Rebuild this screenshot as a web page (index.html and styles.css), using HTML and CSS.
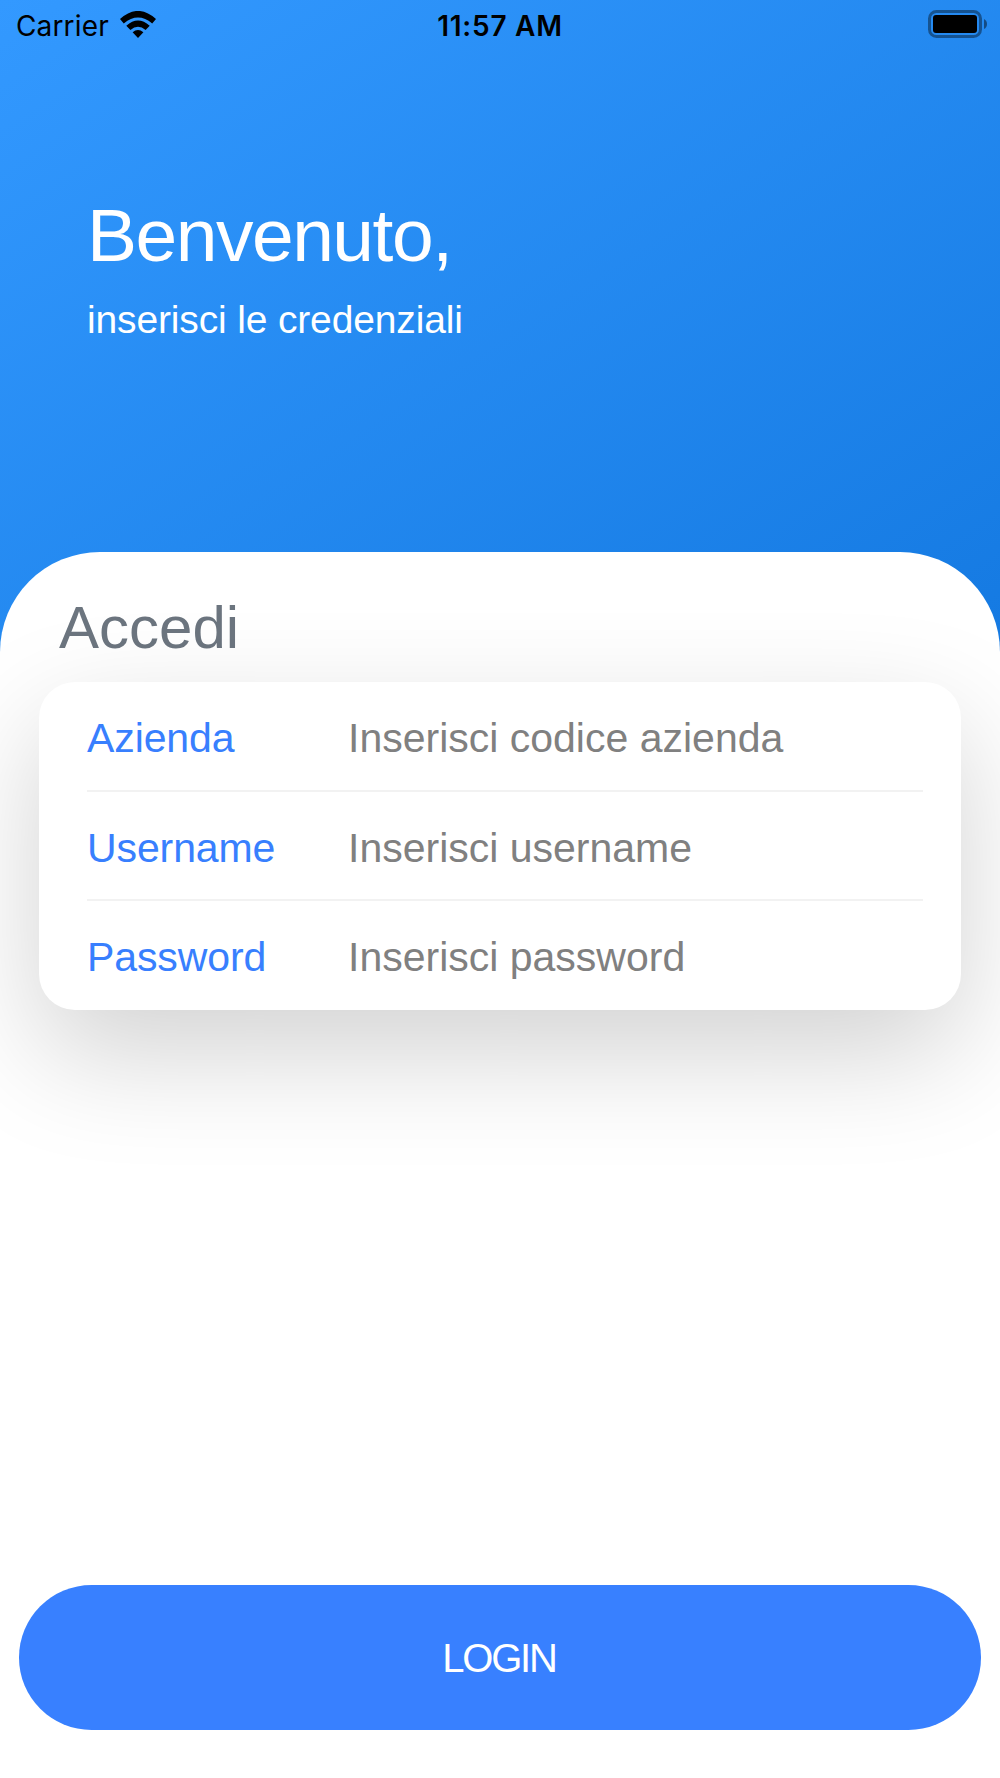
FILE: index.html
```html
<!DOCTYPE html>
<html lang="it">
<head>
<meta charset="utf-8">
<title>Login</title>
<link rel="stylesheet" href="styles.css">
</head>
<body>
<div class="screen">
  <header class="hero">
    <div class="status">
      <div class="carrier"><span class="carrier-name">Carrier</span>
        <svg class="wifi" viewBox="0 0 36 27" width="36" height="27"><path d="M0 8Q18-8.200 36 8L32.200 12.400Q18 .6 3.800 12.400Z"/><path d="M6.300 14.800Q18 4.400 29.700 14.800L25.600 19Q18 12.600 10.400 19Z"/><path d="M12.600 21.200Q18 16.800 23.400 21.200L18 27Z"/></svg>
      </div>
      <div class="time">11:57 AM</div>
      <svg class="battery" viewBox="0 0 59 28" width="59" height="28"><rect class="shell" x="1.500" y="1.500" width="51" height="25" rx="7"/><rect x="5" y="5" width="44" height="18" rx="3"/><path class="cap" d="M56 9Q59 10.500 59 14T56 19Z"/></svg>
    </div>
    <div class="welcome">
      <h1>Benvenuto,</h1>
      <p>inserisci le credenziali</p>
    </div>
  </header>
  <main class="sheet">
    <h2>Accedi</h2>
    <form class="card">
      <div class="row"><span class="label">Azienda</span><span class="hint">Inserisci codice azienda</span></div>
      <div class="row"><span class="label">Username</span><span class="hint">Inserisci username</span></div>
      <div class="row"><span class="label">Password</span><span class="hint">Inserisci password</span></div>
    </form>
    <button class="login" type="button">LOGIN</button>
  </main>
</div>
</body>
</html>
```
FILE: styles.css
```css
* { box-sizing: border-box; }
body { margin: 0; font-family: "Liberation Sans", Arial, sans-serif; }
h1, h2, p { margin: 0; font-weight: 400; }
.screen {
  height: 1778px;
  display: flex;
  flex-direction: column;
  overflow: hidden;
  background: linear-gradient(147deg, #3399ff 0, #1479e1 1110px);
}
.hero { height: 552px; flex: none; }
.status {
  height: 50px;
  padding: 0 13px 0 16px;
  display: grid;
  grid-template-columns: 1fr auto 1fr;
  align-items: center;
  font-family: Inter, sans-serif;
  font-size: 28px;
}
.carrier { display: flex; align-items: center; gap: 11px; }
.carrier-name { padding-top: 2px; letter-spacing: .15px; }
.wifi { display: block; margin-top: -2px; }
.time { font-weight: 600; letter-spacing: .75px; padding-top: 2px; margin-left: -3px; }
.battery { justify-self: end; margin-top: -2px; }
.shell { fill: none; stroke: #000; stroke-opacity: .4; stroke-width: 3; }
.cap { fill-opacity: .45; }
.welcome { padding: 141px 87px 0; color: #fff; }
.welcome h1 { font-size: 75px; line-height: 88px; letter-spacing: -1.5px; }
.welcome p { font-size: 39px; line-height: 46px; margin-top: 18px; letter-spacing: -.15px; }
.sheet {
  flex: 1;
  display: flex;
  flex-direction: column;
  background: #fff;
  border-radius: 100px 100px 0 0;
}
.sheet h2 { color: #6c757f; font-size: 60px; line-height: 68px; padding: 42px 59px 0; }
.card {
  margin: 20px 39px 0;
  padding: 0 38px 0 48px;
  height: 328px;
  flex: none;
  border-radius: 36px;
  background: #fff;
  box-shadow: 0 43px 116px rgba(0, 0, 0, .18);
}
.row {
  height: 109.5px;
  display: flex;
  align-items: center;
  padding-top: 6px;
  font-size: 41px;
  border-bottom: 2px solid #f2f2f2;
}
.row:last-child { border: 0; padding-top: 4px; }
.label { width: 261px; color: #387ffe; letter-spacing: -.1px; }
.hint { color: #808080; }
.login {
  margin: auto 19px 48px;
  height: 145px;
  border: 0;
  border-radius: 73px;
  background: #3880ff;
  color: #fff;
  font-family: inherit;
  font-size: 40px;
  letter-spacing: -2.2px;
  padding: 2px 2px 0 0;
}
```
